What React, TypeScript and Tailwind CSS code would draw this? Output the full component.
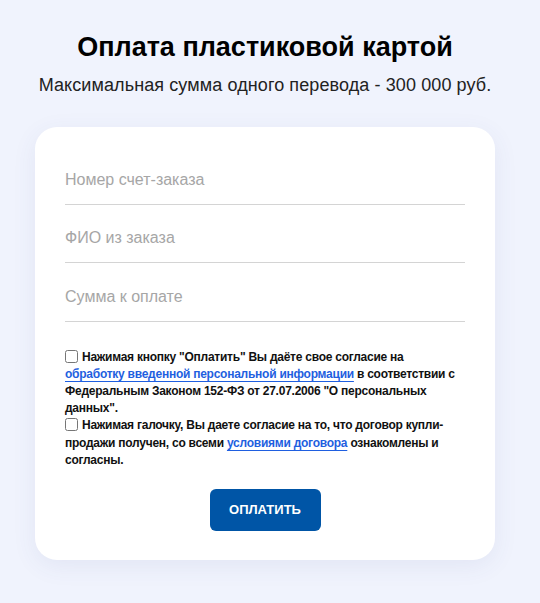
import React, { useState } from 'react'

const font = { fontFamily: '"Liberation Sans", Arial, sans-serif' }

function Field({ placeholder }: { placeholder: string }) {
  const [value, setValue] = useState('')
  return (
    <input
      type="text"
      value={value}
      placeholder={placeholder}
      onChange={(e) => setValue(e.target.value)}
      className="block w-full h-[58.5px] pt-[10px] border-b border-[#d4d4d4] bg-transparent text-[16px] text-[#333] placeholder:text-[#a6a6a6] outline-none"
    />
  )
}

export default function App() {
  const [agree1, setAgree1] = useState(false)
  const [agree2, setAgree2] = useState(false)

  return (
    <div className="min-h-[603px] bg-[#f0f3fd]" style={font}>
      <div className="w-[530px] pt-[30px] pb-[44px]">
        <h1 className="text-center text-[27px] font-bold text-black leading-[34px]">
          Оплата пластиковой картой
        </h1>
        <p className="mt-[10px] text-center text-[18px] text-[#222] leading-[22px] tracking-[0.1px]">
          Максимальная сумма одного перевода - 300 000 руб.
        </p>

        <div className="mx-[35px] mt-[31px] rounded-[22px] bg-white px-[30px] pt-[19px] pb-[29px] shadow-[0_6px_24px_rgba(60,80,140,0.08)]">
          <Field placeholder="Номер счет-заказа" />
          <Field placeholder="ФИО из заказа" />
          <Field placeholder="Сумма к оплате" />

          <div className="mt-[27px] text-[12px] font-bold leading-[17.2px] tracking-[-0.25px] text-[#111]">
            <label className="block">
              <input
                type="checkbox"
                checked={agree1}
                onChange={(e) => setAgree1(e.target.checked)}
                className="mr-[4px] h-[13px] w-[13px] align-[-2px]"
              />
              Нажимая кнопку "Оплатить" Вы даёте свое согласие на{' '}
              <a href="#" className="text-[#1f5fe0] underline decoration-[#1f5fe0] underline-offset-[3px]">
                обработку введенной персональной информации
              </a>{' '}
              в соответствии с Федеральным Законом 152-ФЗ от 27.07.2006 "О персональных данных".
            </label>
            <label className="block">
              <input
                type="checkbox"
                checked={agree2}
                onChange={(e) => setAgree2(e.target.checked)}
                className="mr-[4px] h-[13px] w-[13px] align-[-2px]"
              />
              Нажимая галочку, Вы даете согласие на то, что договор купли-продажи получен, со всеми{' '}
              <a href="#" className="text-[#1f5fe0] underline decoration-[#1f5fe0] underline-offset-[3px]">
                условиями договора
              </a>{' '}
              ознакомлены и согласны.
            </label>
          </div>

          <div className="mt-[20px] flex justify-center">
            <button className="h-[42px] w-[111px] rounded-[6px] bg-[#0055a6] text-[13px] font-bold text-white">
              ОПЛАТИТЬ
            </button>
          </div>
        </div>
      </div>
    </div>
  )
}
